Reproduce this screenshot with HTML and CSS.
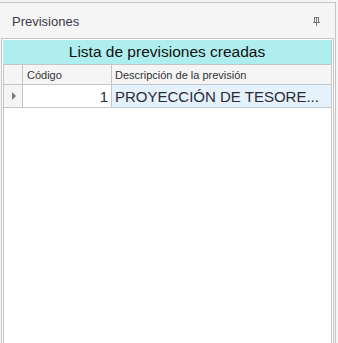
FILE: index.html
```html
<!DOCTYPE html>
<html lang="es">
<head>
<meta charset="utf-8">
<title>Previsiones</title>
<link rel="stylesheet" href="styles.css">
</head>
<body>
<div class="panel">
  <div class="panel-header">
    <span class="panel-title">Previsiones</span>
    <svg class="pin" width="7" height="9" viewBox="0 0 7 9" aria-hidden="true">
      <rect x="1.5" y="0.5" width="4" height="5" fill="none" stroke="#777" stroke-width="1"/>
      <rect x="3" y="1" width="1" height="4" fill="#777"/>
      <rect x="0" y="5" width="7" height="1" fill="#777"/>
      <rect x="3" y="6" width="1" height="3" fill="#777"/>
    </svg>
  </div>
  <div class="grid-outer">
    <div class="grid-inner">
      <div class="grid-caption">Lista de previsiones creadas</div>
      <div class="grid-row head">
        <div class="cell rowhead"></div>
        <div class="cell code">Código</div>
        <div class="cell desc">Descripción de la previsión</div>
      </div>
      <div class="grid-row data">
        <div class="cell rowhead"><span class="arrow"></span></div>
        <div class="cell code num">1</div>
        <div class="cell desc sel">PROYECCIÓN DE TESORE...</div>
      </div>
      <div class="grid-empty"></div>
    </div>
  </div>
</div>
</body>
</html>
```
FILE: styles.css
```css
html, body {
  margin: 0;
  padding: 0;
  background: #f5f5f5;
}
body {
  width: 338px;
  height: 343px;
  overflow: hidden;
  font-family: "Liberation Sans", Arial, sans-serif;
}
.panel {
  box-sizing: border-box;
  width: 336px;
  height: 341px;
  margin-top: 2px;
  border-top: 1px solid #c6c6c6;
  border-right: 1px solid #c6c6c6;
  background: #f5f5f5;
  display: flex;
  flex-direction: column;
}
.panel-header {
  height: 35px;
  display: flex;
  align-items: center;
  justify-content: space-between;
  padding: 0 15px 0 12px;
  box-sizing: border-box;
}
.panel-title {
  font-size: 13px;
  color: #3a3a4a;
  padding-top: 1px;
}
.pin {
  display: block;
  margin-top: 1px;
}
.grid-outer {
  box-sizing: border-box;
  width: 333px;
  margin-left: 1px;
  flex: 1;
  border: 1px solid #c6c6c6;
  border-bottom: none;
  background: #ffffff;
  padding: 1px 1px 0 1px;
  display: flex;
}
.grid-inner {
  flex: 1;
  border-left: 1px solid #c6c6c6;
  border-right: 1px solid #c6c6c6;
  background: #ffffff;
  display: flex;
  flex-direction: column;
}
.grid-caption {
  height: 24px;
  background: #aeeeee;
  margin-left: -1px;
  text-align: center;
  font-size: 15.5px;
  line-height: 24px;
  color: #111;
}
.grid-row {
  display: flex;
  border-top: 1px solid #c6c6c6;
}
.grid-row.head {
  height: 19px;
  background: #f5f5f5;
}
.grid-row.data {
  height: 22px;
  border-bottom: 1px solid #c6c6c6;
}
.cell {
  box-sizing: border-box;
  display: flex;
  align-items: center;
  white-space: nowrap;
  overflow: hidden;
}
.rowhead {
  width: 19px;
  background: #f5f5f5;
  border-right: 1px solid #c6c6c6;
  justify-content: center;
}
.code {
  width: 89px;
  border-right: 1px solid #c6c6c6;
  padding-left: 4px;
}
.desc {
  flex: 1;
  padding-left: 3px;
}
.head .cell {
  font-size: 11px;
  color: #333;
}
.data .cell {
  font-size: 15px;
  color: #2a2a3a;
}
.data .code {
  background: #ffffff;
}
.num {
  justify-content: flex-end;
  padding-right: 3px;
}
.sel {
  background: #e5f1fb;
}
.arrow {
  width: 0;
  height: 0;
  border-top: 4px solid transparent;
  border-bottom: 4px solid transparent;
  border-left: 4px solid #777;
  margin-left: 1px;
}
.grid-empty {
  flex: 1;
}
```
